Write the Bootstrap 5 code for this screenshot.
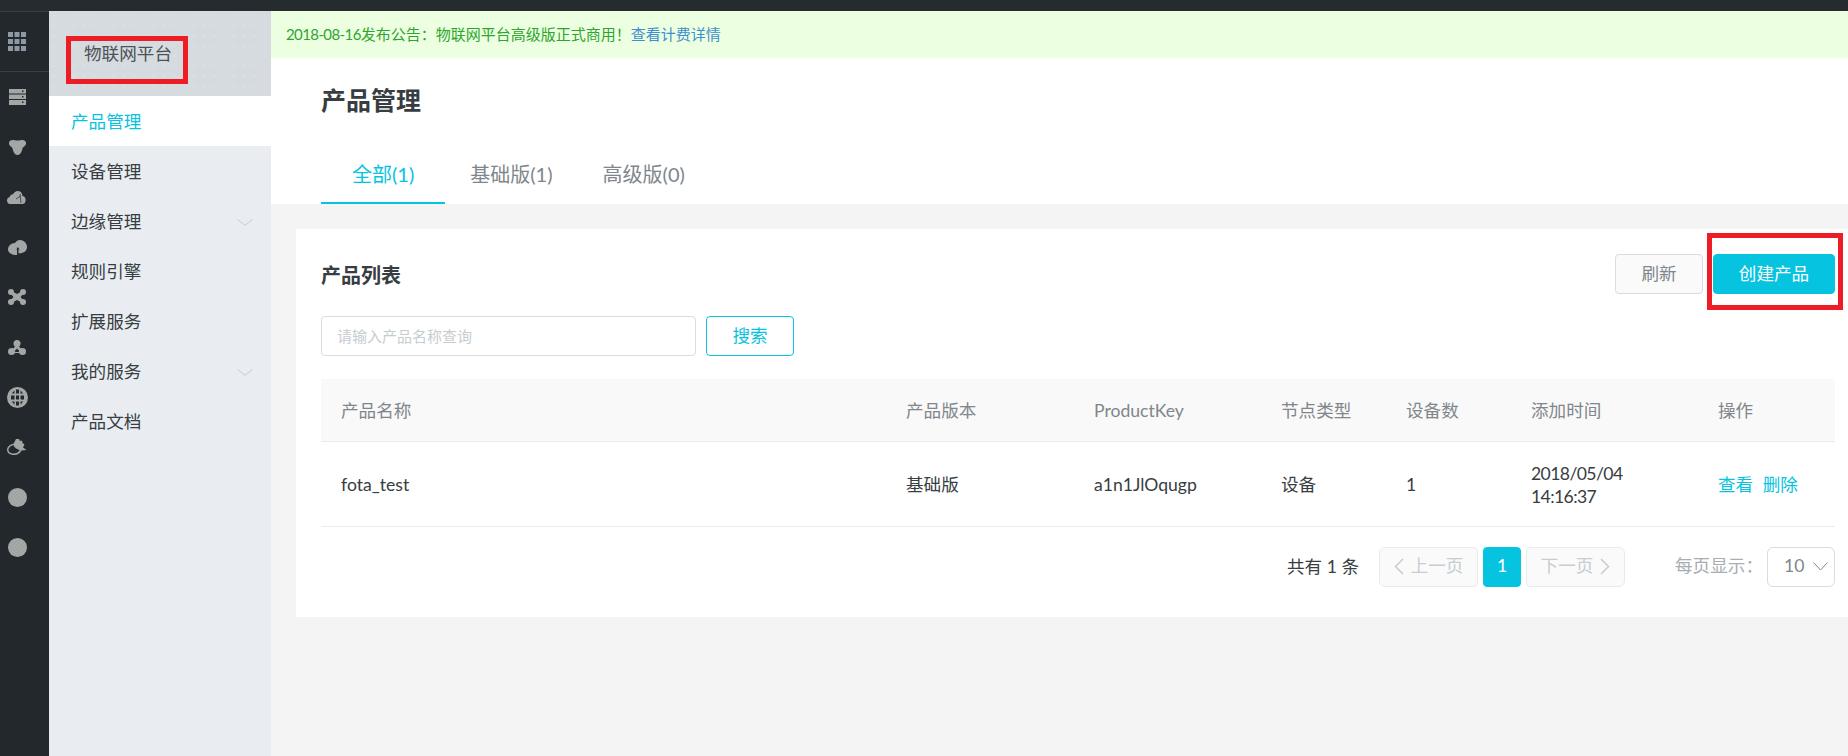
<!DOCTYPE html>
<html lang="zh-CN">

<head>
    <meta charset="UTF-8">
    <meta name="viewport" content="width=device-width, initial-scale=1.0">
    <title>物联网平台 - 产品管理</title>
    <link href="https://cdn.jsdelivr.net/npm/bootstrap@5.3.3/dist/css/bootstrap.min.css" rel="stylesheet">
    <style>
        html, body { height: 100%; }
        body {
            font-family: Lato, "Noto Sans CJK SC", sans-serif;
            font-size: 17.6px;
            color: #373d41;
            overflow: hidden;
            background: #f4f4f4;
        }
        .top-strip { height: 11px; background: #262b2f; }
        .page-wrap { height: 745px; }
        .date-tight { letter-spacing: -.6px; }

        /* dark icon rail */
        .icon-rail { width: 49px; background: #23282d; }
        .rail-top { height: 61px; padding-right: 15px; border-top: 1px solid #3a3f44; border-bottom: 1px solid #3a3f44; }
        .rail-item { height: 50px; padding-right: 15px; }
        .rail-item svg { fill: url(#speck); }

        /* product sidebar */
        .side-menu { width: 222px; background: #e9edf1; }
        .side-head {
            height: 85px;
            padding: 25px 0 0 17px;
            background-color: #d6dbe0;
            background-image: radial-gradient(#eceff1 0.5px, transparent 0.8px);
            background-size: 10px 10px;
        }
        .head-box {
            width: 122px;
            height: 48px;
            border: 5px solid #ee1c25;
            padding: 0 0 0 13px;
            line-height: 26px;
            color: #4a5157;
            font-size: 17.6px;
        }
        .side-link { height: 50px; padding: 2px 18px 0 22px; color: #373d41; }
        .side-link.active { background: #fff; color: #06c3e0; }

        /* main area */
        .main-area { min-width: 0; }
        .notice-bar { height: 47px; padding-left: 15px; background: #ecffe0; color: #2ea52e; font-size: 15px; }
        .notice-bar a { color: #3f8fd0; text-decoration: none; }
        .head-panel { height: 146px; background: #fff; padding-left: 50px; }
        .page-title { height: 84px; font-size: 25px; font-weight: 700; color: #373d41; margin: 0; }
        .tab-row { height: 62px; }
        .tab-link { padding: 4px 25px 0; font-size: 20px; color: #80868b; border-bottom: 2px solid transparent; }
        .tab-link.active { padding: 4px 31px 0; color: #06c3e0; border-bottom-color: #06c3e0; }

        .list-panel { margin: 25px 0 0 25px; padding: 25px 13px 30px 25px; background: #fff; height: 388px; }
        .list-title { font-size: 20px; font-weight: 700; color: #373d41; margin: 2px 0 0; }
        .btn-flat { height: 40px; font-size: 17.6px; padding: 0; border-radius: 4px; }
        .btn-refresh { width: 88px; background: #fafafa; border: 1px solid #d6dde3; color: #80868b; }
        .btn-create { width: 122px; background: #06c3e0; border: 1px solid #06c3e0; color: #fff; }
        .btn-create:hover { background: #06c3e0; color: #fff; }
        .create-wrap { margin-left: 10px; }
        .mark-box { position: absolute; left: -6px; right: -8px; top: -21px; bottom: -16px; border: 5px solid #ee1c25; pointer-events: none; }

        .search-row { margin-top: 22px; }
        .search-input { width: 375px; height: 40px; font-size: 15px; padding: 0 15px; border-color: #d6dde3; border-radius: 4px; }
        .search-input::placeholder { color: #c6cdd1; }
        .btn-search { width: 88px; margin-left: 10px; background: #fff; border: 1px solid #06c3e0; color: #06c3e0; }

        .product-table { table-layout: fixed; width: 1514px; margin: 23px 0 0; }
        .product-table th, .product-table td { padding: 2px 0 0 20px; vertical-align: middle; border-color: #e9ecef; color: #373d41; font-weight: 400; }
        .product-table thead th { height: 62px; background: #f9f9f9; color: #80868b; }
        .product-table tbody td { height: 85px; line-height: 23px; }
        .w-name { width: 565px; } .w-ver { width: 188px; } .w-key { width: 187px; } .w-type { width: 125px; }
        .w-num { width: 125px; } .w-time { width: 187px; } .w-op { width: 137px; }
        .product-table a { color: #06c3e0; text-decoration: none; margin-right: 5px; }

        .pager-row { margin-top: 20px; height: 40px; }
        .pager-total { margin-right: 20px; padding-top: 2px; color: #373d41; }
        .pager-list { margin: 0; gap: 6px; }
        .pager-list .page-link {
            height: 40px;
            display: flex;
            align-items: center;
            justify-content: center;
            padding: 0;
            font-size: 17.6px;
            border-radius: 4px;
        }
        .pager-list .pager-step { width: 99px; gap: 7px; background: #fafafa; border-color: #e8ebee; color: #c6cdd1; }
        .pager-list .pager-num { width: 38px; background: #06c3e0; border-color: #06c3e0; color: #fff; }
        .pager-size { margin: 0 4px 0 50px; color: #a7aeb2; white-space: nowrap; }
        .size-select {
            width: 68px;
            height: 40px;
            padding: 0 0 0 16px;
            font-size: 17.6px;
            color: #80868b;
            border-color: #d6dde3;
            background-image: url("data:image/svg+xml,%3csvg xmlns='http://www.w3.org/2000/svg' viewBox='0 0 15 9'%3e%3cpath fill='none' stroke='%2380868b' d='M.5.500 7.500 8 14.500.500'/%3e%3c/svg%3e");
            background-position: right 6px center;
            background-size: 15px 9px;
        }
    </style>
</head>

<body>
    <!-- speckled fill shared by the rail icons -->
    <svg width="0" height="0" class="position-absolute">
        <defs>
            <pattern id="speck" width="4" height="4" patternUnits="userSpaceOnUse">
                <rect width="4" height="4" fill="#a0a4a3"/>
                <circle cx="1" cy="1" r=".4" fill="#c9ccca"/>
                <circle cx="3" cy="3" r=".4" fill="#c9ccca"/>
            </pattern>
        </defs>
    </svg>

    <div class="top-strip"></div>
    <div class="page-wrap d-flex">

        <!-- icon rail -->
        <div class="icon-rail flex-shrink-0">
            <div class="rail-top d-flex align-items-center justify-content-center">
                <svg width="18" height="19" viewBox="0 0 18 19" fill="#8d9aa6"><rect width="5" height="5"/><rect x="6.500" width="5" height="5"/><rect x="13" width="5" height="5"/><rect y="7" width="5" height="5"/><rect x="6.500" y="7" width="5" height="5"/><rect x="13" y="7" width="5" height="5"/><rect y="14" width="5" height="5"/><rect x="6.500" y="14" width="5" height="5"/><rect x="13" y="14" width="5" height="5"/></svg>
            </div>
            <div class="rail-item d-flex align-items-center justify-content-center">
                <svg width="17" height="16" viewBox="0 0 17 16"><path fill-rule="evenodd" d="M0 0h17v4.500H0zM13 1.500v1.500h1.500V1.500zM0 5.500h17V10H0zM13 7v1.500h1.500V7zM0 11h17v5H0zM13 12.500V14h1.500v-1.500z"/></svg>
            </div>
            <div class="rail-item d-flex align-items-center justify-content-center">
                <svg width="17" height="15" viewBox="0 0 17 15"><path d="M3.500 0c1.700 0 3 .6 5 .6S12 0 13.500 0C16 0 17.500 2 17 4c-.3 1.500-2 2.500-3 3.500-.8 1-1.500 7.500-5.500 7.500S3.800 8.500 3 7.500C2 6.500.3 5.500 0 4-.5 2 1 0 3.500 0z"/></svg>
            </div>
            <div class="rail-item d-flex align-items-center justify-content-center">
                <svg width="20" height="13" viewBox="0 0 20 13"><path d="M3.500 13a3.500 3.500 0 0 1-.8-6.900C3.200 4.200 4.500 3.200 6 3.300 7 1.300 8.800 0 10.800 0c2.300 0 4 1.500 4.500 3.800 0 .4 0 .7-.1 1A4.300 4.300 0 0 1 16 13z"/><path d="M9 8l4.500-3M13 3l1 9" fill="none" stroke="#23282d" stroke-width=".7"/></svg>
            </div>
            <div class="rail-item d-flex align-items-center justify-content-center">
                <svg width="19" height="15" viewBox="0 0 19 15"><path d="M9 15V9L7.500 10.500 10 7l2 3.500L10.500 9v4.500c3-.3 8.500-1 8.500-6.500 0-4-3.500-7-7-7C9.500 0 8 1.500 7 3 3 3 0 6 0 9.500 0 13 4 15 9 15z"/></svg>
            </div>
            <div class="rail-item d-flex align-items-center justify-content-center">
                <svg width="18" height="16" viewBox="0 0 18 16"><circle cx="3" cy="3" r="3"/><circle cx="15" cy="3" r="3"/><circle cx="3" cy="13" r="3"/><circle cx="15" cy="13" r="3"/><path d="M4.500 2.500 9 5l4.500-2.500 2 2L12.500 8l3 3.500-2 2L9 11l-4.500 2.500-2-2L5.500 8l-3-3.500z"/></svg>
            </div>
            <div class="rail-item d-flex align-items-center justify-content-center">
                <svg width="18" height="15" viewBox="0 0 18 15"><circle cx="9" cy="3.500" r="3.500"/><circle cx="3.500" cy="11.500" r="3.500"/><circle cx="14.500" cy="11.500" r="3.500"/><path fill-rule="evenodd" d="M7.500 6 4 10l1 3h8l1-3-3.500-4zM9 8.500l2.500 2.800-1 .7h-3l-1-.7z"/></svg>
            </div>
            <div class="rail-item d-flex align-items-center justify-content-center">
                <svg width="21" height="21" viewBox="0 0 21 21"><path fill-rule="evenodd" d="M10.500 0a10.500 10.500 0 1 1 0 21 10.500 10.500 0 0 1 0-21zM7.500 3.500c-1 .8-2 2-2.500 3h2.500zM13.500 3.500v3H16c-.5-1-1.500-2.200-2.500-3zM9 2.500v4h3v-4zM4 8.500v4h3.500v-4zM9 8.500v4h3v-4zM13.500 8.500v4H17v-4zM5 14.500c.5 1 1.500 2.200 2.500 3v-3zM9 14.500v4h3v-4zM13.500 14.500v3c1-.8 2-2 2.500-3z"/></svg>
            </div>
            <div class="rail-item d-flex align-items-center justify-content-center">
                <svg width="21" height="16" viewBox="0 0 21 16"><path fill-rule="evenodd" d="M9 0h3l1 2 2-.5.500 2.500 2 1.500-1.500 3 3.500 2.500-5 .5c-1.500 3-4.500 4.500-7 4.500C3.500 16 0 14 0 11c0-3 3-6 6.500-6.300L8 2zM6.500 6C4 6.500 1.500 8.500 1.500 11c0 2 2.500 3.500 5 3.500 2.700 0 5-1 6.300-3.500-2.800-.5-5.800-2.500-6.300-5z"/></svg>
            </div>
            <div class="rail-item d-flex align-items-center justify-content-center">
                <svg width="19" height="19" viewBox="0 0 19 19"><circle cx="9.500" cy="9.500" r="9.500"/></svg>
            </div>
            <div class="rail-item d-flex align-items-center justify-content-center">
                <svg width="19" height="19" viewBox="0 0 19 19"><circle cx="9.500" cy="9.500" r="9.500"/></svg>
            </div>
        </div>

        <!-- sidebar -->
        <div class="side-menu flex-shrink-0">
            <div class="side-head">
                <div class="head-box">物联网平台</div>
            </div>
            <nav class="nav flex-column">
                <a class="nav-link side-link active d-flex align-items-center" href="#">产品管理</a>
                <a class="nav-link side-link d-flex align-items-center" href="#">设备管理</a>
                <a class="nav-link side-link d-flex align-items-center justify-content-between" href="#">边缘管理
                    <svg width="16" height="7" viewBox="0 0 16 7" fill="none" stroke="#c5cace"><path d="M.5.500 8 6.300 15.500.500"/></svg>
                </a>
                <a class="nav-link side-link d-flex align-items-center" href="#">规则引擎</a>
                <a class="nav-link side-link d-flex align-items-center" href="#">扩展服务</a>
                <a class="nav-link side-link d-flex align-items-center justify-content-between" href="#">我的服务
                    <svg width="16" height="7" viewBox="0 0 16 7" fill="none" stroke="#c5cace"><path d="M.5.500 8 6.300 15.500.500"/></svg>
                </a>
                <a class="nav-link side-link d-flex align-items-center" href="#">产品文档</a>
            </nav>
        </div>

        <!-- main -->
        <div class="main-area flex-grow-1">
            <div class="notice-bar d-flex align-items-center">
                <span><span class="date-tight">2018-08-16</span>发布公告：物联网平台高级版正式商用！<a href="#">查看计费详情</a></span>
            </div>
            <div class="head-panel">
                <h1 class="page-title d-flex align-items-center">产品管理</h1>
                <div class="tab-row d-flex">
                    <a class="tab-link active d-flex align-items-center text-decoration-none" href="#">全部(1)</a>
                    <a class="tab-link d-flex align-items-center text-decoration-none" href="#">基础版(1)</a>
                    <a class="tab-link d-flex align-items-center text-decoration-none" href="#">高级版(0)</a>
                </div>
            </div>

            <div class="list-panel">
                <div class="d-flex align-items-center justify-content-between">
                    <h2 class="list-title">产品列表</h2>
                    <div class="d-flex">
                        <button type="button" class="btn btn-flat btn-refresh">刷新</button>
                        <div class="create-wrap position-relative">
                            <button type="button" class="btn btn-flat btn-create">创建产品</button>
                            <span class="mark-box"></span>
                        </div>
                    </div>
                </div>

                <div class="search-row d-flex">
                    <input type="text" class="form-control search-input" placeholder="请输入产品名称查询">
                    <button type="button" class="btn btn-flat btn-search">搜索</button>
                </div>

                <table class="table product-table">
                    <colgroup>
                        <col class="w-name"><col class="w-ver"><col class="w-key"><col class="w-type"><col class="w-num"><col class="w-time"><col class="w-op">
                    </colgroup>
                    <thead>
                        <tr>
                            <th>产品名称</th>
                            <th>产品版本</th>
                            <th>ProductKey</th>
                            <th>节点类型</th>
                            <th>设备数</th>
                            <th>添加时间</th>
                            <th>操作</th>
                        </tr>
                    </thead>
                    <tbody>
                        <tr>
                            <td>fota_test</td>
                            <td>基础版</td>
                            <td>a1n1JlOqugp</td>
                            <td>设备</td>
                            <td>1</td>
                            <td class="date-tight">2018/05/04<br>14:16:37</td>
                            <td><a href="#">查看</a> <a href="#">删除</a></td>
                        </tr>
                    </tbody>
                </table>

                <div class="pager-row d-flex align-items-center justify-content-end">
                    <span class="pager-total">共有 1 条</span>
                    <ul class="pagination pager-list">
                        <li class="page-item"><a class="page-link pager-step" href="#">
                            <svg width="10" height="17" viewBox="0 0 10 17" fill="none" stroke="#c6cdd1" stroke-width="1.500"><path d="M9 1 1.500 8.500 9 16"/></svg>上一页</a></li>
                        <li class="page-item"><a class="page-link pager-num" href="#">1</a></li>
                        <li class="page-item"><a class="page-link pager-step" href="#">下一页
                            <svg width="10" height="17" viewBox="0 0 10 17" fill="none" stroke="#c6cdd1" stroke-width="1.500"><path d="m1 1 7.500 7.500L1 16"/></svg></a></li>
                    </ul>
                    <span class="pager-size">每页显示：</span>
                    <select class="form-select size-select">
                        <option>10</option>
                        <option>20</option>
                        <option>50</option>
                    </select>
                </div>
            </div>
        </div>
    </div>

    <script src="https://cdn.jsdelivr.net/npm/bootstrap@5.3.3/dist/js/bootstrap.bundle.min.js"></script>
</body>

</html>
